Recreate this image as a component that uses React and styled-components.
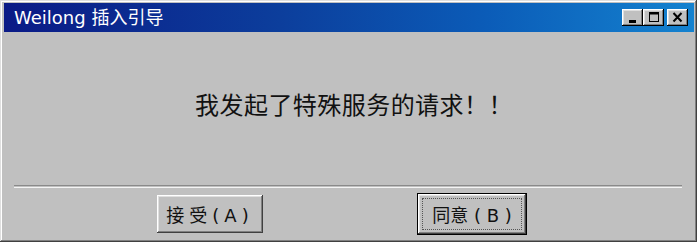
import React from "react";
import styled, { createGlobalStyle } from "styled-components";

const Global = createGlobalStyle`
  html, body { margin: 0; padding: 0; background: #ffffff; }
  #root { width: 700px; height: 248px; }
`;

const Window = styled.div`
  box-sizing: border-box;
  width: 697px;
  height: 242px;
  background: #c0c0c0;
  padding: 3px 3px 0 4px;
  display: flex;
  flex-direction: column;
  box-shadow: inset -1px -1px 0 #404040, inset 1px 1px 0 #dfdfdf,
    inset -2px -2px 0 #808080, inset 2px 2px 0 #ffffff;
`;

const TitleBar = styled.div`
  height: 29px;
  flex: none;
  display: flex;
  align-items: center;
  padding: 0 6px 0 10px;
  background: linear-gradient(90deg, #0a1a86 0%, #0c3e9c 40%, #0b5cb8 70%, #1482cf 100%);
`;

const Title = styled.div`
  flex: 1;
  color: #ffffff;
  font-family: "DejaVu Sans", "Noto Sans CJK SC", sans-serif;
  font-size: 18px;
  line-height: 1;
  padding-top: 1px;
`;

const Controls = styled.div`
  display: flex;
  align-items: center;
`;

const CtlButton = styled.div`
  box-sizing: border-box;
  width: 21px;
  height: 17px;
  margin-left: ${(p) => (p.$gap ? "3px" : "0")};
  background: #c0c0c0;
  display: flex;
  align-items: center;
  justify-content: center;
  box-shadow: inset -1px -1px 0 #000000, inset 1px 1px 0 #ffffff,
    inset -2px -2px 0 #808080, inset 2px 2px 0 #dfdfdf;
`;

const Body = styled.div`
  flex: 1;
  display: flex;
  flex-direction: column;
`;

const MessageArea = styled.div`
  height: 153px;
  display: flex;
  align-items: center;
  justify-content: center;
  padding-bottom: 10px;
  box-sizing: border-box;
`;

const Message = styled.div`
  font-family: "Noto Sans CJK SC", sans-serif;
  font-size: 24px;
  letter-spacing: 0.45px;
  color: #111111;
  margin-left: 10px;
`;

const Separator = styled.div`
  margin: 0 12px 0 10px;
  height: 1px;
  border-top: 1px solid #8a8a8a;
  border-bottom: 1px solid #f4f4f4;
`;

const ButtonRow = styled.div`
  flex: 1;
  display: flex;
  align-items: center;
  padding-left: 153px;
  gap: 154px;
  padding-bottom: 2px;
`;

const Button = styled.div`
  box-sizing: border-box;
  width: ${(p) => (p.$default ? "110px" : "106px")};
  height: ${(p) => (p.$default ? "42px" : "38px")};
  background: #c0c0c0;
  display: flex;
  align-items: center;
  justify-content: center;
  position: relative;
  font-family: "DejaVu Sans", "Noto Sans CJK SC", sans-serif;
  font-size: 18px;
  color: #111111;
  letter-spacing: ${(p) => p.$spacing || "0px"};
  border: ${(p) => (p.$default ? "1px solid #000000" : "none")};
  box-shadow: inset -1px -1px 0 #404040, inset 1px 1px 0 #ffffff,
    inset -2px -2px 0 #808080, inset 2px 2px 0 #dfdfdf;
`;

const Focus = styled.div`
  position: absolute;
  inset: 4px;
  border: 1px dotted #555555;
  pointer-events: none;
`;

export default function App() {
  return (
    <>
      <Global />
      <Window>
        <TitleBar>
          <Title>Weilong 插入引导</Title>
          <Controls>
            <CtlButton>
              <svg width="13" height="11" viewBox="0 0 13 11">
                <rect x="3" y="8" width="7" height="3" fill="#000" />
              </svg>
            </CtlButton>
            <CtlButton>
              <svg width="13" height="11" viewBox="0 0 13 11">
                <rect x="2.5" y="0.5" width="9" height="9" fill="none" stroke="#000" />
                <rect x="2" y="0" width="10" height="2.5" fill="#000" />
              </svg>
            </CtlButton>
            <CtlButton $gap>
              <svg width="13" height="11" viewBox="0 0 13 11">
                <path d="M2.5 1 L10.5 9.5 M10.5 1 L2.5 9.5" stroke="#000" strokeWidth="2" />
              </svg>
            </CtlButton>
          </Controls>
        </TitleBar>
        <Body>
          <MessageArea>
            <Message>我发起了特殊服务的请求！！</Message>
          </MessageArea>
          <Separator />
          <ButtonRow>
            <Button $spacing="5px">接受(A)</Button>
            <Button $default>
              同意 ( B )
              <Focus />
            </Button>
          </ButtonRow>
        </Body>
      </Window>
    </>
  );
}
